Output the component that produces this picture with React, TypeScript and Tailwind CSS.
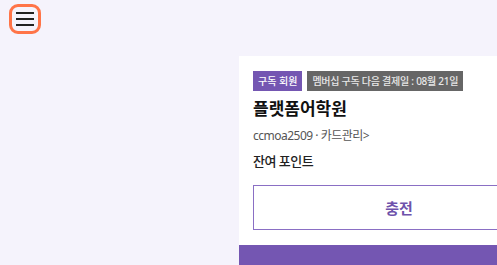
import React from "react";

export default function App() {
  const font = { fontFamily: '"Noto Sans", "Noto Sans CJK KR", sans-serif' };
  return (
    <div className="w-[497px] h-[265px] bg-[#f5f3fc] overflow-hidden flex flex-col" style={font}>
      <div className="h-[59px] pl-[9px] pt-[4px]">
        <div className="w-[32px] h-[30px] rounded-[9px] border-[3px] border-[#ff7448] flex flex-col items-center justify-center gap-[4px]">
          <div className="w-[18px] h-[2px] bg-[#222]" />
          <div className="w-[18px] h-[2px] bg-[#222]" />
          <div className="w-[18px] h-[2px] bg-[#222]" />
        </div>
      </div>
      <div className="ml-[239px] w-[320px] shrink-0 bg-white flex flex-col">
        <div className="px-[14px] pt-[15px]">
          <div className="flex gap-[5px] h-[20px]">
            <span className="bg-[#7456b2] text-white text-[10px] font-medium leading-[20px] px-[5px]">구독 회원</span>
            <span className="bg-[#666666] text-[#e8e8e8] text-[10px] font-medium leading-[20px] px-[5px] tracking-[-0.25px]">멤버십 구독 다음 결제일 : 08월 21일</span>
          </div>
          <div className="mt-[5px] text-[17px] font-bold text-[#111] leading-[26px]">플랫폼어학원</div>
          <div className="mt-[4px] text-[12px] text-[#555] leading-[20px] tracking-[-0.5px]">ccmoa2509 · 카드관리&gt;</div>
          <div className="mt-[5px] text-[13px] text-[#222] leading-[20px] font-medium tracking-[-0.5px]">잔여 포인트</div>
          <div className="mt-[14px] h-[45px] border-[1.5px] border-[#8a6fc4] flex items-center justify-center text-[#6e52ab] text-[15px] font-bold pt-[2px]">
            충전
          </div>
        </div>
        <div className="mt-[15px] h-[20px] bg-[#7456b2]" />
      </div>
    </div>
  );
}
